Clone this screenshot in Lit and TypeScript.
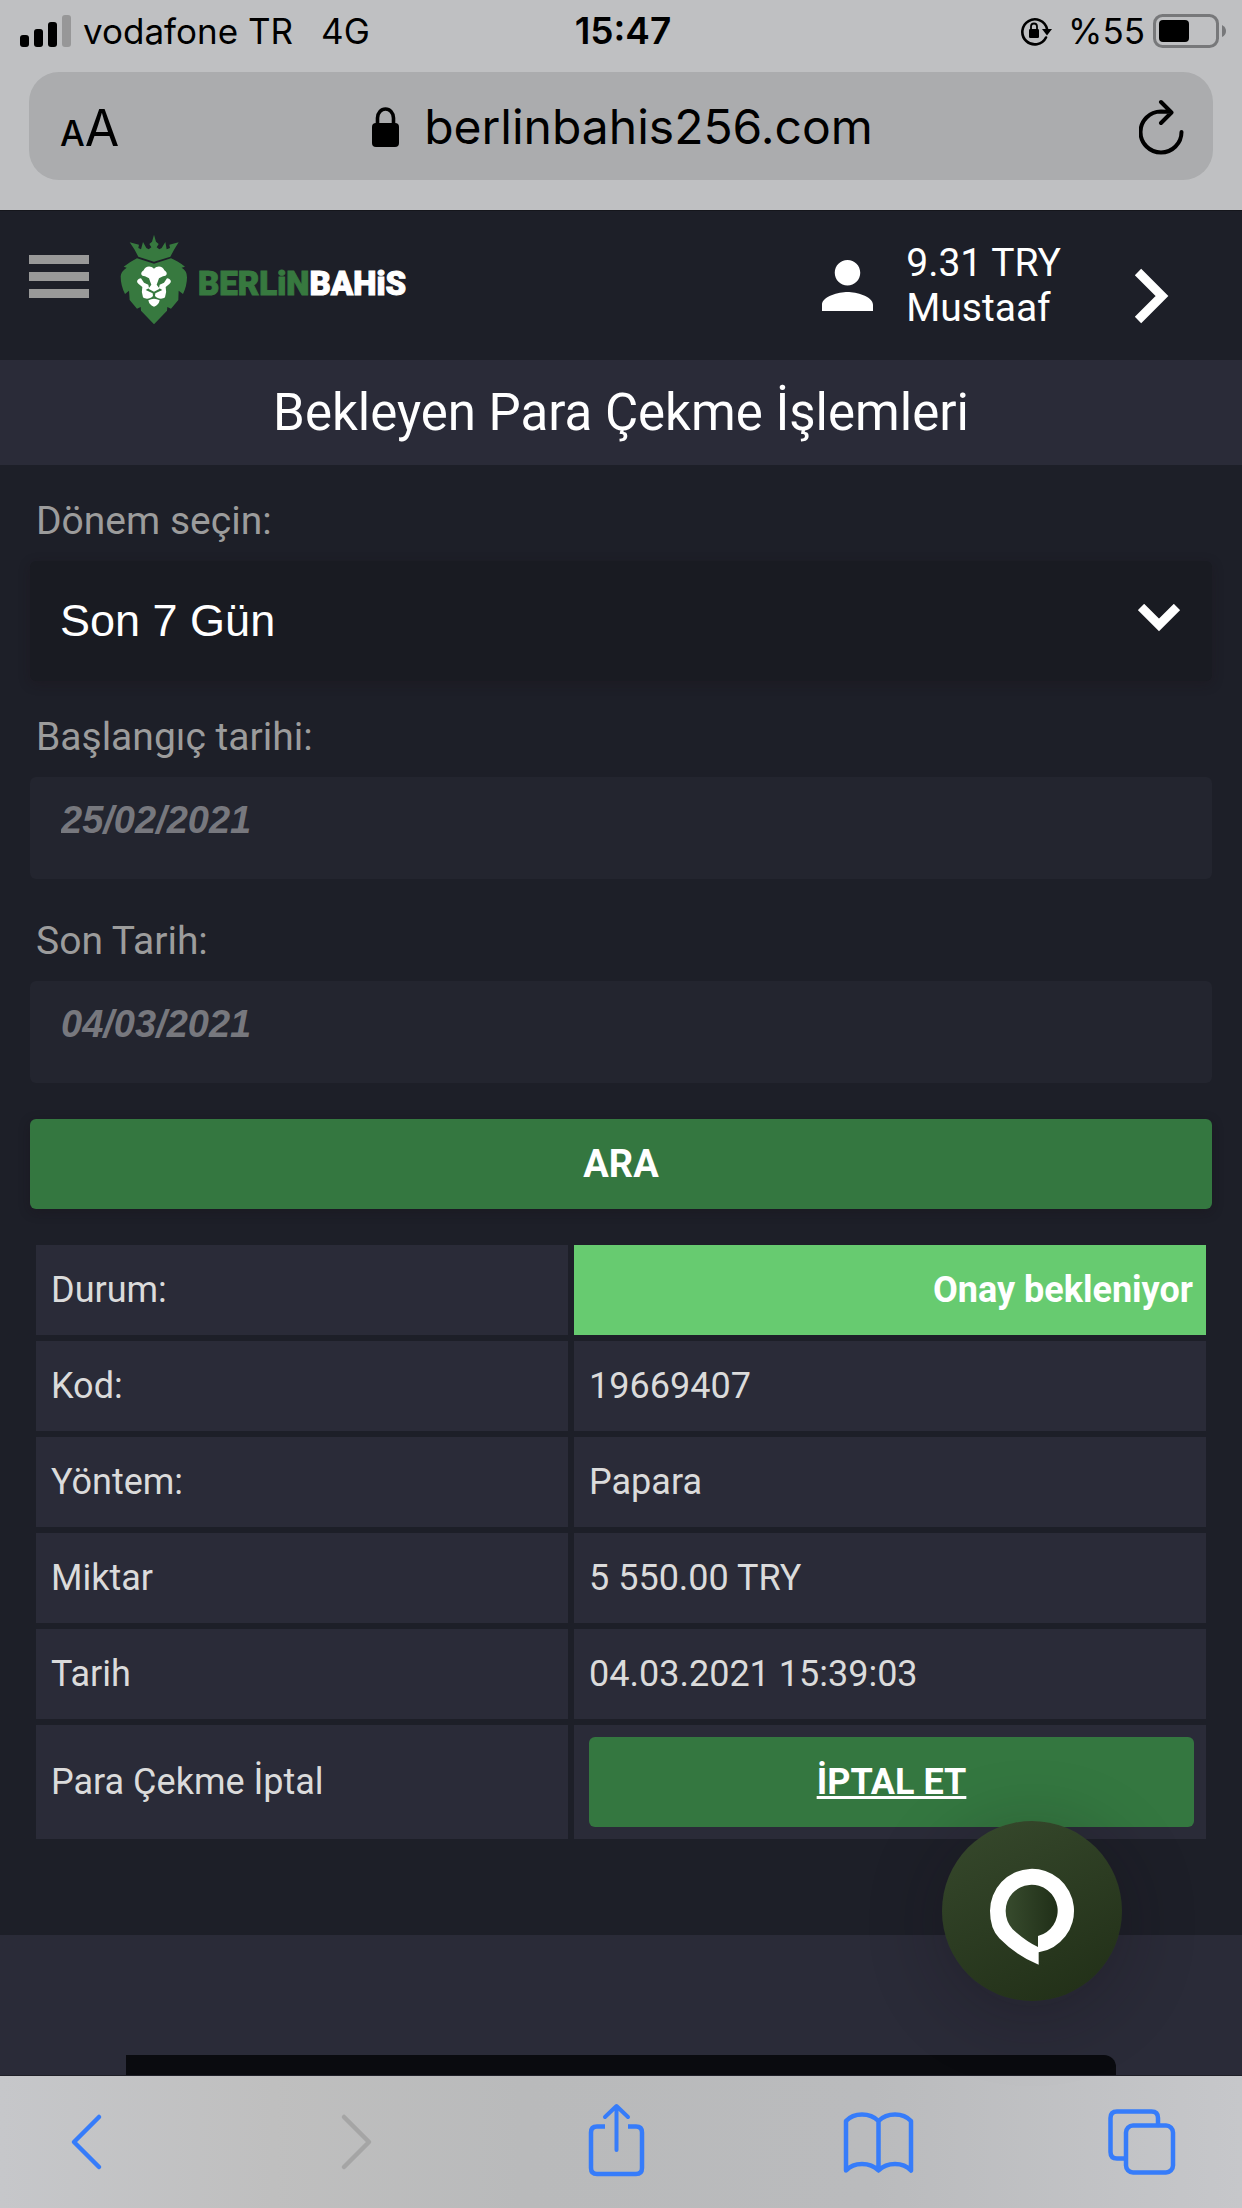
import { LitElement, html, css, svg } from "lit";
import { customElement, property } from "lit/decorators.js";

interface DetailRow {
  label: string;
  value: string;
}

const ROWS: DetailRow[] = [
  { label: "Kod:", value: "19669407" },
  { label: "Yöntem:", value: "Papara" },
  { label: "Miktar", value: "5 550.00 TRY" },
  { label: "Tarih", value: "04.03.2021 15:39:03" },
];

@customElement("status-bar")
export class StatusBar extends LitElement {
  static styles = css`
    :host {
      display: grid;
      grid-template-columns: 1fr auto 1fr;
      align-items: center;
      height: 62px;
      padding: 0 16px 0 20px;
      font: 400 35px/40px Inter, "Liberation Sans", sans-serif;
      color: #000;
    }
    .side {
      display: flex;
      align-items: center;
    }
    .end {
      justify-content: flex-end;
    }
    .carrier {
      margin-left: 12px;
    }
    .network {
      margin-left: 28px;
    }
    .time {
      font-size: 37px;
      font-weight: 600;
    }
    .charge {
      margin: 0 8px 0 16px;
    }
    svg {
      display: block;
      flex: none;
    }
  `;

  render() {
    return html`
      <div class="side">
        <svg width="51" height="32" viewBox="0 0 51 32" aria-hidden="true">
          <rect x="0" y="20" width="9" height="12" rx="3" />
          <rect x="14" y="14" width="9" height="18" rx="3" />
          <rect x="28" y="7" width="9" height="25" rx="3" />
          <rect x="42" y="0" width="9" height="32" rx="3" fill="#979798" />
        </svg>
        <span class="carrier">vodafone TR</span>
        <span class="network">4G</span>
      </div>
      <span class="time">15:47</span>
      <div class="side end">
        <svg width="32" height="30" viewBox="0 0 32 30" aria-hidden="true">
          <path d="M26 21.500A12.500 12.500 0 1 1 27 13" fill="none" stroke="#000" stroke-width="2.600" stroke-linecap="round" />
          <path d="M22 13h10l-5 6.500z" />
          <rect x="9" y="13" width="10" height="9" rx="1.200" />
          <path d="M11 13.500v-3a3 3 0 0 1 6 0v3" fill="none" stroke="#000" stroke-width="1.800" />
        </svg>
        <span class="charge">%55</span>
        <svg width="73" height="34" viewBox="0 0 73 34" aria-hidden="true">
          <rect x="1.500" y="1.500" width="63" height="31" rx="8" fill="none" stroke="#77787a" stroke-width="3" />
          <rect x="6" y="6" width="30" height="22" rx="4" />
          <path d="M69 11q4 2 4 6t-4 6z" fill="#77787a" />
        </svg>
      </div>
    `;
  }
}

@customElement("address-bar")
export class AddressBar extends LitElement {
  static styles = css`
    :host {
      display: block;
      padding: 10px 29px 30px;
    }
    .bar {
      display: grid;
      grid-template-columns: 1fr auto 1fr;
      align-items: center;
      box-sizing: border-box;
      height: 108px;
      padding: 2px 28px 0 31px;
      border-radius: 30px;
      background: #abacae;
    }
    button,
    a {
      padding: 0;
      border: 0;
      background: none;
      color: #000;
      font: 400 48px/60px Inter, "Liberation Sans", sans-serif;
      text-decoration: none;
    }
    .size {
      display: flex;
      align-items: baseline;
      justify-self: start;
      padding-top: 6px;
      font-size: 50px;
    }
    .small {
      font-size: 35px;
      font-weight: 500;
    }
    .site {
      display: flex;
      align-items: center;
      gap: 25px;
    }
    .reload {
      justify-self: end;
    }
    svg {
      display: block;
    }
  `;

  render() {
    return html`
      <div class="bar">
        <button class="size" aria-label="Metin boyutu"><span class="small">A</span><span>A</span></button>
        <a class="site" href="#">
          <svg width="27" height="40" viewBox="0 0 27 40" aria-hidden="true">
            <rect x="0" y="16" width="27" height="24" rx="4" />
            <path d="M5.500 18v-7a8 9 0 0 1 16 0v7" fill="none" stroke="#000" stroke-width="3.600" />
          </svg>
          <span>berlinbahis256.com</span>
        </a>
        <button class="reload" aria-label="Yenile">
          <svg width="46" height="56" viewBox="0 0 46 56" aria-hidden="true">
            <path
              d="M42.500 33A20.500 20.500 0 1 1 22 12.500L32 13M22 3L32.500 13.500L22 24"
              fill="none" stroke="#000" stroke-width="4" stroke-linecap="round" stroke-linejoin="round" />
          </svg>
        </button>
      </div>
    `;
  }
}

const cheek = svg`<path d="M424 203C413 204 408 214 417 220L428 229Q424 244 430 260C440 268 452 264 460 256L459 248L438 238L448 232L446 222L433 216Z"/>`;

@customElement("site-header")
export class SiteHeader extends LitElement {
  @property() balance = "9.31 TRY";
  @property() user = "Mustaaf";

  static styles = css`
    :host {
      display: flex;
      align-items: center;
      height: 150px;
      padding: 0 73px 0 29px;
      box-sizing: border-box;
      border-top: 1px solid #15161c;
      background: #1d1f28;
    }
    button,
    a {
      padding: 0;
      border: 0;
      background: none;
      color: #fff;
      text-decoration: none;
    }
    .menu {
      display: grid;
      gap: 8px;
      width: 60px;
      padding-bottom: 18px;
    }
    .line {
      height: 9px;
      background: #999;
    }
    .logo {
      display: flex;
      align-items: center;
      gap: 10px;
      margin-left: 31px;
      padding-bottom: 12px;
      font: 900 33px/44px Roboto, sans-serif;
      -webkit-text-stroke: 1px currentColor;
    }
    .wordmark {
      padding-top: 8px;
    }
    .green {
      color: #37793f;
    }
    .account {
      display: flex;
      align-items: center;
      gap: 33px;
      margin-left: auto;
      font: 400 39px/45px Roboto, sans-serif;
    }
    .next {
      margin: 20px 0 0 73px;
    }
    .lines {
      display: grid;
    }
    svg {
      display: block;
      flex: none;
    }
  `;

  render() {
    return html`
      <button class="menu" aria-label="Menü">
        <span class="line"></span><span class="line"></span><span class="line"></span>
      </button>
      <a class="logo" href="#">
        <svg width="68" height="92" viewBox="361 70 204 276" aria-hidden="true">
          <g fill="#37793f">
            <path d="M390 95L418 102L416 112L424 116L430 94L440 112L447 116L455 110L449 100L457 93L463 72L469 93L477 100L471 110L479 116L486 112L497 94L501 116L511 112L509 102L537 95L524 116L512 138L463 153L416 138L404 116Z" />
            <path d="M412 143L463 159L514 143Q532 150 556 168L546 171Q562 180 562 200Q562 225 550 250L537 240L536 268L514 294L503 289L502 300L463 341L424 300L423 289L412 294L390 268L388 240L376 250Q363 225 363 197Q364 182 381 171L372 168Q394 152 412 143Z" />
          </g>
          <g fill="#fff">
            <path d="M463 174C452 163 436 167 432 179C420 187 424 197 436 197L448 203L455 222L446 234L463 243L480 234L471 222L478 203L490 197C502 197 506 187 494 179C490 167 474 163 463 174Z" />
            ${cheek}
            <g transform="translate(926 0) scale(-1 1)">${cheek}</g>
            <path d="M446 269Q463 259 480 269Q477 284 463 288Q449 284 446 269Z" />
          </g>
        </svg>
        <span class="wordmark"><span class="green">BERLiN</span>BAHiS</span>
      </a>
      <a class="account" href="#">
        <svg width="51" height="51" viewBox="4 4 16 16" fill="#fff" aria-hidden="true">
          <path d="M12 12c2.210 0 4-1.790 4-4s-1.790-4-4-4-4 1.790-4 4 1.790 4 4 4zm0 2c-2.670 0-8 1.340-8 4v2h16v-2c0-2.660-5.330-4-8-4z" />
        </svg>
        <span class="lines"><span>${this.balance}</span><span>${this.user}</span></span>
      </a>
      <button class="next" aria-label="İleri">
        <svg width="35" height="56" viewBox="0 0 35 56" aria-hidden="true">
          <path d="M4 4L28 28L4 52" fill="none" stroke="#fff" stroke-width="9" />
        </svg>
      </button>
    `;
  }
}

@customElement("search-form")
export class SearchForm extends LitElement {
  static styles = css`
    form {
      display: flex;
      flex-direction: column;
      gap: 33px;
    }
    .field {
      display: grid;
      gap: 17px;
    }
    .field.date + .field.date {
      margin-top: 6px;
    }
    label {
      padding-left: 6px;
      color: #9c9c9c;
      font: 400 39px/46px Roboto, sans-serif;
    }
    .picker {
      display: grid;
      align-items: center;
    }
    select,
    input {
      box-sizing: border-box;
      width: 100%;
      margin: 0;
      border: 0;
      border-radius: 6px;
      outline: 0;
    }
    select {
      grid-area: 1 / 1;
      height: 120px;
      padding: 0 90px 0 30px;
      appearance: none;
      background: #191b22;
      box-shadow: 0 3px 12px rgba(30, 18, 24, 0.3);
      color: #fff;
      font: 400 45px/54px "Liberation Sans", sans-serif;
    }
    .arrow {
      grid-area: 1 / 1;
      justify-self: end;
      margin: 0 32px 6px 0;
      pointer-events: none;
    }
    input {
      height: 102px;
      padding: 0 31px 16px;
      background: #23252f;
      color: #77787e;
      font: italic 700 38px/48px "Liberation Sans", sans-serif;
    }
    .submit {
      height: 90px;
      margin-top: 3px;
      border: 0;
      border-radius: 6px;
      background: #347740;
      box-shadow: 0 3px 12px rgba(24, 12, 20, 0.3);
      color: #fff;
      font: 700 38px/42px Roboto, sans-serif;
    }
  `;

  render() {
    return html`
      <form @submit=${(e: Event) => e.preventDefault()}>
        <div class="field">
          <label for="period">Dönem seçin:</label>
          <div class="picker">
            <select id="period">
              <option>Son 7 Gün</option>
            </select>
            <svg class="arrow" width="42" height="28" viewBox="0 0 42 28" aria-hidden="true">
              <path d="M3 3L21 21L39 3" fill="none" stroke="#fff" stroke-width="9" />
            </svg>
          </div>
        </div>
        <div class="field date">
          <label for="from">Başlangıç tarihi:</label>
          <input id="from" type="text" value="25/02/2021" />
        </div>
        <div class="field date">
          <label for="to">Son Tarih:</label>
          <input id="to" type="text" value="04/03/2021" />
        </div>
        <button class="submit" type="submit">ARA</button>
      </form>
    `;
  }
}

@customElement("withdrawal-table")
export class WithdrawalTable extends LitElement {
  @property({ attribute: false }) rows: DetailRow[] = [];

  static styles = css`
    table {
      width: 100%;
      table-layout: fixed;
      border-spacing: 6px;
      color: #dbdbdb;
      font: 400 36px/42px Roboto, sans-serif;
    }
    th,
    td {
      height: 90px;
      padding: 0 15px;
      box-sizing: border-box;
      background: #2a2b38;
      font-weight: 400;
      text-align: left;
    }
    .names {
      width: 532px;
    }
    .pending {
      padding-right: 13px;
      background: #67cb70;
      color: #fff;
      font-weight: 700;
      text-align: right;
    }
    .action {
      padding: 12px 12px 12px 15px;
    }
    .cancel {
      display: block;
      padding: 24px 0;
      border-radius: 6px;
      background: #347740;
      color: #fff;
      font-weight: 700;
      text-align: center;
    }
  `;

  render() {
    return html`
      <table>
        <colgroup>
          <col class="names" />
          <col />
        </colgroup>
        <tbody>
          <tr>
            <th scope="row">Durum:</th>
            <td class="pending">Onay bekleniyor</td>
          </tr>
          ${this.rows.map(
            (row) => html`<tr>
              <th scope="row">${row.label}</th>
              <td>${row.value}</td>
            </tr>`
          )}
          <tr>
            <th scope="row">Para Çekme İptal</th>
            <td class="action"><a class="cancel" href="#">İPTAL ET</a></td>
          </tr>
        </tbody>
      </table>
    `;
  }
}

@customElement("browser-toolbar")
export class BrowserToolbar extends LitElement {
  static styles = css`
    :host {
      display: flex;
      justify-content: space-between;
      height: 132px;
      padding: 26px 60px 0 46px;
      box-sizing: border-box;
      background: linear-gradient(90deg, #c6c7ca 0, #bfbfbf 22%, #b9babb 42%, #babbbd 70%, #c6c7ca 100%);
    }
    button {
      width: 80px;
      height: 76px;
      padding: 0;
      border: 0;
      background: none;
      color: #367cfa;
    }
    button:disabled {
      color: #a5a5a5;
    }
    svg {
      display: block;
      fill: none;
      stroke: currentColor;
      stroke-width: 4.5;
      stroke-linecap: round;
      stroke-linejoin: round;
    }
  `;

  render() {
    return html`
      <button aria-label="Geri">
        <svg width="80" height="76" viewBox="0 0 80 76"><path d="M53 15L28 40L53 65" /></svg>
      </button>
      <button aria-label="İleri" disabled>
        <svg width="80" height="76" viewBox="0 0 80 76"><path d="M34 15L59 40L34 65" /></svg>
      </button>
      <button aria-label="Paylaş">
        <svg width="80" height="76" viewBox="-2 0 80 76">
          <path d="M29 24.500H21Q15 24.500 15 30.500V66Q15 72 21 72H60Q66 72 66 66V30.500Q66 24.500 60 24.500H52" stroke-linecap="butt" />
          <path d="M40.500 48V5M29 15L40.500 4L52 15" stroke-width="4" />
        </svg>
      </button>
      <button aria-label="Yer imleri">
        <svg width="80" height="76" viewBox="0 0 80 76">
          <path d="M40.500 19Q34 12.500 24 12.500Q14 12.500 8 19V68.500Q14 62 24 62Q34 62 40.500 68.500Q47 62 57 62Q67 62 73 68.500V19Q67 12.500 57 12.500Q47 12.500 40.500 19V68" />
        </svg>
      </button>
      <button aria-label="Sekmeler">
        <svg width="80" height="76" viewBox="0 0 80 76">
          <rect x="24" y="23.500" width="47" height="47" rx="7" />
          <path d="M23 56.500H15Q8.500 56.500 8.500 50V16Q8.500 9.500 15 9.500H49.500Q56 9.500 56 16V23" />
        </svg>
      </button>
    `;
  }
}

@customElement("app-root")
export class AppRoot extends LitElement {
  static styles = css`
    :host {
      display: flex;
      flex-direction: column;
      min-height: 100vh;
      background: #1d1f28;
    }
    .chrome {
      background: #bfc0c2;
    }
    .page {
      position: relative;
      display: flex;
      flex: 1;
      flex-direction: column;
    }
    h1 {
      margin: 0;
      padding: 23px 30px 22px;
      background: #2a2b38;
      color: #fff;
      font: 400 51px/60px Roboto, sans-serif;
      text-align: center;
    }
    .content {
      display: grid;
      gap: 30px;
      padding: 33px 30px 90px;
    }
    footer {
      display: flex;
      flex: 1;
      padding: 120px 126px 0;
      border-bottom: 1px solid #202028;
      background: #2a2b38;
    }
    .banner {
      flex: 1;
      border-top-right-radius: 12px;
      background: #0a0b0f;
    }
    .chat {
      position: absolute;
      right: 120px;
      bottom: 75px;
      width: 180px;
      height: 180px;
      padding: 0;
      border: 0;
      border-radius: 50%;
      background: linear-gradient(155deg, #35472b 8%, #223018 92%);
      box-shadow: 0 12px 75px rgba(20, 12, 20, 0.3);
    }
    .chat svg {
      display: block;
    }
  `;

  render() {
    return html`
      <div class="chrome">
        <status-bar></status-bar>
        <address-bar></address-bar>
      </div>
      <main class="page">
        <site-header></site-header>
        <h1>Bekleyen Para Çekme İşlemleri</h1>
        <div class="content">
          <search-form></search-form>
          <withdrawal-table .rows=${ROWS}></withdrawal-table>
        </div>
        <footer><div class="banner"></div></footer>
        <button class="chat" aria-label="Canlı destek">
          <svg width="180" height="180" viewBox="186 123 540 540" aria-hidden="true">
            <defs>
              <linearGradient id="hole" x1="0" x2="1">
                <stop offset="0.100" stop-color="#35482b" />
                <stop offset="1" stop-color="#202f18" />
              </linearGradient>
            </defs>
            <path fill="#fff" d="M476 554Q410 528 358 475Q330 446 330 393A126 126 0 1 1 476 517Z" />
            <path fill="url(#hole)" d="M474 501Q440 486 398 448Q377 424 377 393A78 78 0 1 1 474 468Z" />
          </svg>
        </button>
      </main>
      <browser-toolbar></browser-toolbar>
    `;
  }
}
